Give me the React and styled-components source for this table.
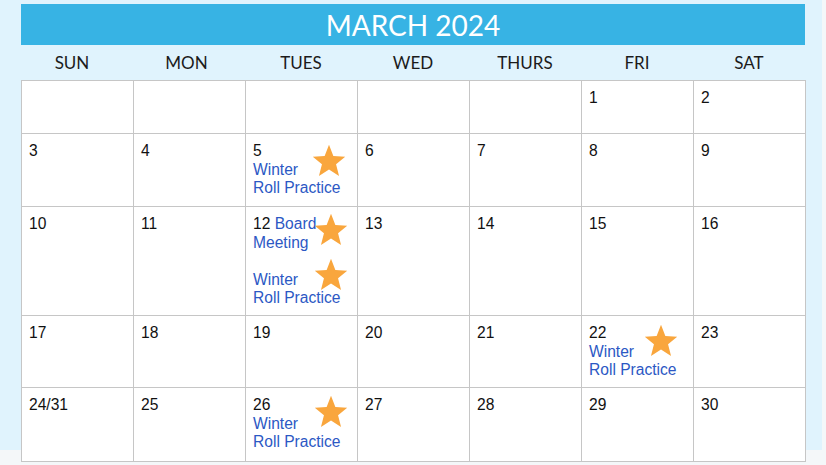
import React from 'react';
import styled, { createGlobalStyle } from 'styled-components';

const GlobalStyle = createGlobalStyle`
  body {
    margin: 0;
    background: #f4f7f9;
  }
`;

const DAYS = ['SUN', 'MON', 'TUES', 'WED', 'THURS', 'FRI', 'SAT'];
const ROW_HEIGHTS = [53, 73, 109, 72, 74];

const practice = ['Winter', 'Roll Practice'];

// 달력 데이터 (빈칸은 null)
const weeks = [
  [null, null, null, null, null, { n: '1' }, { n: '2' }],
  [
    { n: '3' },
    { n: '4' },
    { n: '5', lines: practice, stars: [{ top: 9, right: 10 }] },
    { n: '6' },
    { n: '7' },
    { n: '8' },
    { n: '9' },
  ],
  [
    { n: '10' },
    { n: '11' },
    {
      n: '12',
      lead: 'Board',
      lines: ['Meeting', '', ...practice],
      stars: [
        { top: 5, right: 8 },
        { top: 50, right: 8 },
      ],
    },
    { n: '13' },
    { n: '14' },
    { n: '15' },
    { n: '16' },
  ],
  [
    { n: '17' },
    { n: '18' },
    { n: '19' },
    { n: '20' },
    { n: '21' },
    { n: '22', lines: practice, stars: [{ top: 7, right: 14 }] },
    { n: '23' },
  ],
  [
    { n: '24/31' },
    { n: '25' },
    { n: '26', lines: practice, stars: [{ top: 6, right: 8 }] },
    { n: '27' },
    { n: '28' },
    { n: '29' },
    { n: '30' },
  ],
];

function Star({ top, right }) {
  return (
    <StStar $top={top} $right={right} viewBox="0 0 24 24">
      <polygon points="12,1.2 14.9,8.7 22.8,9.1 16.7,14.1 18.7,22 12,17.6 5.3,22 7.3,14.1 1.2,9.1 9.1,8.7" />
    </StStar>
  );
}

function DayCell({ day }) {
  if (!day) return <StCell />;
  return (
    <StCell>
      <StLine>
        {day.n}
        {day.lead && <StEvent> {day.lead}</StEvent>}
      </StLine>
      {day.lines &&
        day.lines.map((line, i) => (
          <StLine key={i} $event>
            {line || '\u00a0'}
          </StLine>
        ))}
      {day.stars && day.stars.map((s, i) => <Star key={i} top={s.top} right={s.right} />)}
    </StCell>
  );
}

export default function App() {
  return (
    <>
      <GlobalStyle />
      <StPanel>
        <StCalendar>
          <StTitle>MARCH 2024</StTitle>
          <StDayNames>
            {DAYS.map((d) => (
              <span key={d}>{d}</span>
            ))}
          </StDayNames>
          <StGrid>
            {weeks.flat().map((day, i) => (
              <DayCell key={i} day={day} />
            ))}
          </StGrid>
        </StCalendar>
      </StPanel>
    </>
  );
}

const StPanel = styled.div`
  width: 822px;
  height: 465px;
  background: linear-gradient(to bottom, #e0f3fd 450px, #f4f7f9 450px);
  padding: 4px 0 0 21px;
  box-sizing: border-box;
`;

const StCalendar = styled.div`
  width: 785px;
  display: flex;
  flex-direction: column;
`;

const StTitle = styled.div`
  height: 41px;
  margin-right: 1px;
  background: #37b3e4;
  color: #ffffff;
  font-family: 'Lato', sans-serif;
  font-size: 28px;
  display: flex;
  align-items: center;
  justify-content: center;
`;

const StDayNames = styled.div`
  height: 35px;
  display: grid;
  grid-template-columns: repeat(7, 112px);
  align-items: center;
  font-family: 'Lato', sans-serif;
  font-size: 17px;
  color: #1b1b1b;
  span {
    text-align: center;
  }
  span:first-child {
    padding-right: 10px;
  }
  span:nth-child(2) {
    padding-right: 5px;
  }
`;

const StGrid = styled.div`
  display: grid;
  grid-template-columns: repeat(7, 112px);
  grid-template-rows: ${ROW_HEIGHTS.map((h) => `${h}px`).join(' ')};
  border-top: 1px solid #c6c6c6;
  border-left: 1px solid #c6c6c6;
  background: #ffffff;
`;

const StCell = styled.div`
  position: relative;
  padding: 8px 8px 0 7px;
  border-right: 1px solid #c6c6c6;
  border-bottom: 1px solid #c6c6c6;
  font-family: 'Liberation Sans', Arial, sans-serif;
  font-size: 15.6px;
  color: #111111;
`;

const StLine = styled.div`
  line-height: 18.6px;
  white-space: nowrap;
  color: ${(p) => (p.$event ? '#2c58c4' : 'inherit')};
`;

const StEvent = styled.span`
  color: #2c58c4;
`;

const StStar = styled.svg`
  position: absolute;
  top: ${(p) => p.$top}px;
  right: ${(p) => p.$right}px;
  width: 36px;
  height: 36px;
  fill: #f9a63d;
`;
